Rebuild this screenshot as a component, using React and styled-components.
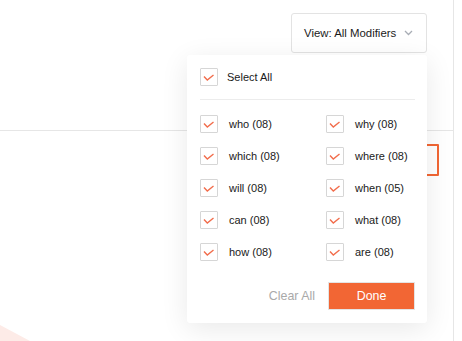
import React from 'react'
import styled, { createGlobalStyle } from 'styled-components'

const Global = createGlobalStyle`
  html, body { margin: 0; padding: 0; background: #fff; }
  body { font-family: "Liberation Sans", Arial, sans-serif; color: #222; }
`;

const Page = styled.div`
  display: flex;
  width: 462px;
  height: 341px;
  overflow: hidden;
`;

const Main = styled.div`
  position: relative;
  width: 453px;
  height: 341px;
  border-right: 1px solid #e6e6e6;
  overflow: hidden;
`;

const Header = styled.div`
  height: 131px;
  border-bottom: 1px solid #e6e6e6;
  display: flex;
  justify-content: flex-end;
  align-items: flex-start;
  padding: 13px 26px 0 0;
  box-sizing: border-box;
`;

const ViewWrap = styled.div`
  position: relative;
`;

const ViewButton = styled.button`
  width: 136px;
  height: 40px;
  display: flex;
  align-items: center;
  justify-content: space-between;
  padding: 0 13px 0 12px;
  background: #fff;
  border: 1px solid #e3e3e3;
  border-radius: 3px;
  font-family: inherit;
  font-size: 11.4px;
  color: #1a1a1a;
  cursor: pointer;
`;

const Body = styled.div`
  display: flex;
  justify-content: flex-end;
  padding: 13px 14px 0 0;
`;

const SearchBox = styled.div`
  width: 200px;
  height: 28px;
  border: 2px solid #f26634;
  border-radius: 1px;
`;

const Blob = styled.svg`
  position: absolute;
  left: 0;
  bottom: 0;
`;

const Menu = styled.div`
  position: absolute;
  top: 42px;
  right: 0;
  width: 240px;
  padding: 13px 12px 13px 13px;
  box-sizing: border-box;
  background: #fff;
  border-radius: 3px;
  box-shadow: 0 6px 28px rgba(0, 0, 0, 0.09);
  z-index: 5;
`;

const Option = styled.label`
  display: flex;
  align-items: center;
  gap: ${({ $gap }) => $gap}px;
  height: 18px;
  font-size: 11px;
  color: #1a1a1a;
  white-space: nowrap;
`;

const Box = styled.span`
  width: 18px;
  height: 18px;
  box-sizing: border-box;
  border: 1px solid #d6d6d6;
  border-radius: 1px;
  display: flex;
  align-items: center;
  justify-content: center;
  flex: none;
`;

const Divider = styled.div`
  height: 1px;
  background: #ececec;
  margin: 13px 0 15px;
`;

const Grid = styled.div`
  display: grid;
  grid-template-columns: 126px 1fr;
  row-gap: 14px;
`;

const Footer = styled.div`
  display: flex;
  justify-content: flex-end;
  align-items: center;
  gap: 13px;
  margin-top: 21px;
`;

const ClearButton = styled.button`
  background: none;
  border: none;
  padding: 0;
  font-family: inherit;
  font-size: 12.4px;
  color: #a9a9a9;
  cursor: pointer;
`;

const DoneButton = styled.button`
  width: 87px;
  height: 28px;
  background: #f26634;
  border: 1px solid #e4e4e4;
  color: #fff;
  font-family: inherit;
  font-size: 12.4px;
  cursor: pointer;
`;

const Check = () => (
  <Box>
    <svg width="16" height="16" viewBox="0 0 16 16">
      <path d="M3 7.5 L6.3 11 L12.5 6" fill="none" stroke="#f26d4c" strokeWidth="1.4" />
    </svg>
  </Box>
)

const items = [
  ['who', '08'], ['why', '08'],
  ['which', '08'], ['where', '08'],
  ['will', '08'], ['when', '05'],
  ['can', '08'], ['what', '08'],
  ['how', '08'], ['are', '08'],
]

export default function App() {
  return (
    <Page>
      <Global />
      <Main>
        <Header>
          <ViewWrap>
            <ViewButton>
              View: All Modifiers
              <svg width="9" height="6" viewBox="0 0 9 6">
                <path d="M1 1 L4.5 4.5 L8 1" fill="none" stroke="#a8adb5" strokeWidth="1.3" />
              </svg>
            </ViewButton>
            <Menu>
              <Option $gap={9}>
                <Check />
                Select All
              </Option>
              <Divider />
              <Grid>
                {items.map(([word, n]) => (
                  <Option key={word} $gap={11}>
                    <Check />
                    {word} ({n})
                  </Option>
                ))}
              </Grid>
              <Footer>
                <ClearButton>Clear All</ClearButton>
                <DoneButton>Done</DoneButton>
              </Footer>
            </Menu>
          </ViewWrap>
        </Header>
        <Body>
          <SearchBox />
        </Body>
        <Blob width="40" height="18" viewBox="0 0 40 18">
          <path d="M0 2 L30 18 L0 18 Z" fill="#fdebe7" />
        </Blob>
      </Main>
    </Page>
  )
}
